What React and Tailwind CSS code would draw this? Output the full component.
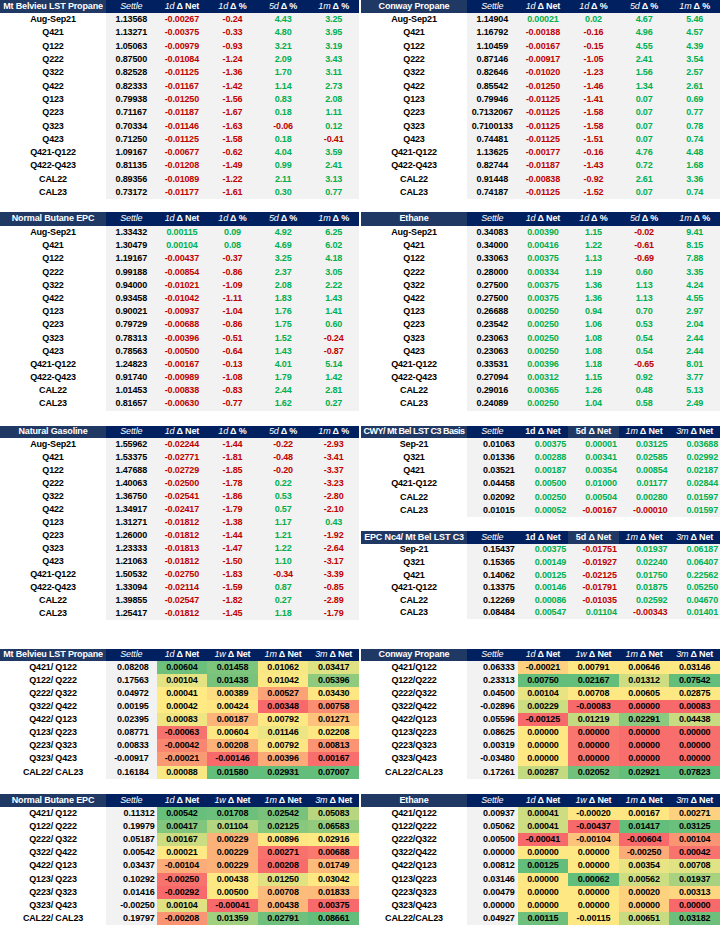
import React from 'react';

// colours taken from the sheet
const NAVY = 'bg-[#002060]';
const NAVY_LABEL = 'bg-[#203864]';

const pctHeads = [['Settle', ''], ['1d', ' Δ Net'], ['1d', ' Δ %'], ['5d', ' Δ %'], ['1m', ' Δ %']];
const basisHeads = [['Settle', ''], ['', '1d Δ Net'], ['', '5d Δ Net'], ['1m', ' Δ Net'], ['3m', ' Δ Net']];
const heatHeads = [['Settle', ''], ['1d', ' Δ Net'], ['1w', ' Δ Net'], ['1m', ' Δ Net'], ['3m', ' Δ Net']];

const mtBelvieu = [
  ['Aug-Sep21', '1.13568', '-0.00267', '-0.24', '4.43', '3.25'],
  ['Q421', '1.13271', '-0.00375', '-0.33', '4.80', '3.95'],
  ['Q122', '1.05063', '-0.00979', '-0.93', '3.21', '3.19'],
  ['Q222', '0.87500', '-0.01084', '-1.24', '2.09', '3.43'],
  ['Q322', '0.82528', '-0.01125', '-1.36', '1.70', '3.11'],
  ['Q422', '0.82333', '-0.01167', '-1.42', '1.14', '2.73'],
  ['Q123', '0.79938', '-0.01250', '-1.56', '0.83', '2.08'],
  ['Q223', '0.71167', '-0.01187', '-1.67', '0.18', '1.11'],
  ['Q323', '0.70334', '-0.01146', '-1.63', '-0.06', '0.12'],
  ['Q423', '0.71250', '-0.01125', '-1.58', '0.18', '-0.41'],
  ['Q421-Q122', '1.09167', '-0.00677', '-0.62', '4.04', '3.59'],
  ['Q422-Q423', '0.81135', '-0.01208', '-1.49', '0.99', '2.41'],
  ['CAL22', '0.89356', '-0.01089', '-1.22', '2.11', '3.13'],
  ['CAL23', '0.73172', '-0.01177', '-1.61', '0.30', '0.77'],
];

const conway = [
  ['Aug-Sep21', '1.14904', '0.00021', '0.02', '4.67', '5.46'],
  ['Q421', '1.16792', '-0.00188', '-0.16', '4.96', '4.57'],
  ['Q122', '1.10459', '-0.00167', '-0.15', '4.55', '4.39'],
  ['Q222', '0.87146', '-0.00917', '-1.05', '2.41', '3.54'],
  ['Q322', '0.82646', '-0.01020', '-1.23', '1.56', '2.57'],
  ['Q422', '0.85542', '-0.01250', '-1.46', '1.34', '2.61'],
  ['Q123', '0.79946', '-0.01125', '-1.41', '0.07', '0.69'],
  ['Q223', '0.7132067', '-0.01125', '-1.58', '0.07', '0.77'],
  ['Q323', '0.7100133', '-0.01125', '-1.58', '0.07', '0.78'],
  ['Q423', '0.74481', '-0.01125', '-1.51', '0.07', '0.74'],
  ['Q421-Q122', '1.13625', '-0.00177', '-0.16', '4.76', '4.48'],
  ['Q422-Q423', '0.82744', '-0.01187', '-1.43', '0.72', '1.68'],
  ['CAL22', '0.91448', '-0.00838', '-0.92', '2.61', '3.36'],
  ['CAL23', '0.74187', '-0.01125', '-1.52', '0.07', '0.74'],
];

const butane = [
  ['Aug-Sep21', '1.33432', '0.00115', '0.09', '4.92', '6.25'],
  ['Q421', '1.30479', '0.00104', '0.08', '4.69', '6.02'],
  ['Q122', '1.19167', '-0.00437', '-0.37', '3.25', '4.18'],
  ['Q222', '0.99188', '-0.00854', '-0.86', '2.37', '3.05'],
  ['Q322', '0.94000', '-0.01021', '-1.09', '2.08', '2.22'],
  ['Q422', '0.93458', '-0.01042', '-1.11', '1.83', '1.43'],
  ['Q123', '0.90021', '-0.00937', '-1.04', '1.76', '1.41'],
  ['Q223', '0.79729', '-0.00688', '-0.86', '1.75', '0.60'],
  ['Q323', '0.78313', '-0.00396', '-0.51', '1.52', '-0.24'],
  ['Q423', '0.78563', '-0.00500', '-0.64', '1.43', '-0.87'],
  ['Q421-Q122', '1.24823', '-0.00167', '-0.13', '4.01', '5.14'],
  ['Q422-Q423', '0.91740', '-0.00989', '-1.08', '1.79', '1.42'],
  ['CAL22', '1.01453', '-0.00838', '-0.83', '2.44', '2.81'],
  ['CAL23', '0.81657', '-0.00630', '-0.77', '1.62', '0.27'],
];

const ethane = [
  ['Aug-Sep21', '0.34083', '0.00390', '1.15', '-0.02', '9.41'],
  ['Q421', '0.34000', '0.00416', '1.22', '-0.61', '8.15'],
  ['Q122', '0.33063', '0.00375', '1.13', '-0.69', '7.88'],
  ['Q222', '0.28000', '0.00334', '1.19', '0.60', '3.35'],
  ['Q322', '0.27500', '0.00375', '1.36', '1.13', '4.24'],
  ['Q422', '0.27500', '0.00375', '1.36', '1.13', '4.55'],
  ['Q123', '0.26688', '0.00250', '0.94', '0.70', '2.97'],
  ['Q223', '0.23542', '0.00250', '1.06', '0.53', '2.04'],
  ['Q323', '0.23063', '0.00250', '1.08', '0.54', '2.44'],
  ['Q423', '0.23063', '0.00250', '1.08', '0.54', '2.44'],
  ['Q421-Q122', '0.33531', '0.00396', '1.18', '-0.65', '8.01'],
  ['Q422-Q423', '0.27094', '0.00312', '1.15', '0.92', '3.77'],
  ['CAL22', '0.29016', '0.00365', '1.26', '0.48', '5.13'],
  ['CAL23', '0.24089', '0.00250', '1.04', '0.58', '2.49'],
];

const natGas = [
  ['Aug-Sep21', '1.55962', '-0.02244', '-1.44', '-0.22', '-2.93'],
  ['Q421', '1.53375', '-0.02771', '-1.81', '-0.48', '-3.41'],
  ['Q122', '1.47688', '-0.02729', '-1.85', '-0.20', '-3.37'],
  ['Q222', '1.40063', '-0.02500', '-1.78', '0.22', '-3.23'],
  ['Q322', '1.36750', '-0.02541', '-1.86', '0.53', '-2.80'],
  ['Q422', '1.34917', '-0.02417', '-1.79', '0.57', '-2.10'],
  ['Q123', '1.31271', '-0.01812', '-1.38', '1.17', '0.43'],
  ['Q223', '1.26000', '-0.01812', '-1.44', '1.21', '-1.92'],
  ['Q323', '1.23333', '-0.01813', '-1.47', '1.22', '-2.64'],
  ['Q423', '1.21063', '-0.01812', '-1.50', '1.10', '-3.17'],
  ['Q421-Q122', '1.50532', '-0.02750', '-1.83', '-0.34', '-3.39'],
  ['Q422-Q423', '1.33094', '-0.02114', '-1.59', '0.87', '-0.85'],
  ['CAL22', '1.39855', '-0.02547', '-1.82', '0.27', '-2.89'],
  ['CAL23', '1.25417', '-0.01812', '-1.45', '1.18', '-1.79'],
];

const cwyBasis = [
  ['Sep-21', '0.01063', '0.00375', '0.00001', '0.03125', '0.03688'],
  ['Q321', '0.01336', '0.00288', '0.00341', '0.02585', '0.02992'],
  ['Q421', '0.03521', '0.00187', '0.00354', '0.00854', '0.02187'],
  ['Q421-Q122', '0.04458', '0.00500', '0.01000', '0.01177', '0.02844'],
  ['CAL22', '0.02092', '0.00250', '0.00504', '0.00280', '0.01597'],
  ['CAL23', '0.01015', '0.00052', '-0.00167', '-0.00010', '0.01597'],
];

const epcBasis = [
  ['Sep-21', '0.15437', '0.00375', '-0.01751', '0.01937', '0.06187'],
  ['Q321', '0.15365', '0.00149', '-0.01927', '0.02240', '0.06407'],
  ['Q421', '0.14062', '0.00125', '-0.02125', '0.01750', '0.22562'],
  ['Q421-Q122', '0.13375', '0.00146', '-0.01791', '0.01875', '0.05250'],
  ['CAL22', '0.12269', '0.00086', '-0.01035', '0.02592', '0.04670'],
  ['CAL23', '0.08484', '0.00547', '0.01104', '-0.00343', '0.01401'],
];

// heat map rows: label, settle, then [value, bg] pairs
const heatMtBel = [
  ['Q421/ Q122', '0.08208', ['0.00604', 'bg-[#6cc07b]'], ['0.01458', 'bg-[#7dc47d]'], ['0.01062', 'bg-[#f7e883]'], ['0.03417', 'bg-[#dfe283]']],
  ['Q122/ Q222', '0.17563', ['0.00104', 'bg-[#e4e383]'], ['0.01438', 'bg-[#78c27c]'], ['0.01042', 'bg-[#fde984]'], ['0.05396', 'bg-[#8fca7e]']],
  ['Q222/ Q322', '0.04972', ['0.00041', 'bg-[#ffea84]'], ['0.00389', 'bg-[#fedc81]'], ['0.00527', 'bg-[#fba276]'], ['0.03430', 'bg-[#fee683]']],
  ['Q322/ Q422', '0.00195', ['0.00042', 'bg-[#ffea84]'], ['0.00424', 'bg-[#fee683]'], ['0.00348', 'bg-[#f8696b]'], ['0.00758', 'bg-[#fa8d72]']],
  ['Q422/ Q123', '0.02395', ['0.00083', 'bg-[#efe683]'], ['0.00187', 'bg-[#fcb47a]'], ['0.00792', 'bg-[#fee884]'], ['0.01271', 'bg-[#fdc37d]']],
  ['Q123/ Q223', '0.08771', ['-0.00063', 'bg-[#f8726d]'], ['0.00604', 'bg-[#fee884]'], ['0.01146', 'bg-[#ebe583]'], ['0.02208', 'bg-[#fee884]']],
  ['Q223/ Q323', '0.00833', ['-0.00042', 'bg-[#f9876f]'], ['0.00208', 'bg-[#fcb179]'], ['0.00792', 'bg-[#fee583]'], ['0.00813', 'bg-[#fa9473]']],
  ['Q323/ Q423', '-0.00917', ['-0.00021', 'bg-[#fa9a74]'], ['-0.00146', 'bg-[#f8696b]'], ['0.00396', 'bg-[#fbaa78]'], ['0.00167', 'bg-[#f86e6c]']],
  ['CAL22/ CAL23', '0.16184', ['0.00088', 'bg-[#f7e883]'], ['0.01580', 'bg-[#63be7b]'], ['0.02931', 'bg-[#63be7b]'], ['0.07007', 'bg-[#63be7b]']],
];

const heatConway = [
  ['Q421/Q122', '0.06333', ['-0.00021', 'bg-[#fdd17f]'], ['0.00791', 'bg-[#fee884]'], ['0.00646', 'bg-[#fee884]'], ['0.03146', 'bg-[#fee884]']],
  ['Q122/Q222', '0.23313', ['0.00750', 'bg-[#63be7b]'], ['0.02167', 'bg-[#63be7b]'], ['0.01312', 'bg-[#cfdd82]'], ['0.07542', 'bg-[#63be7b]']],
  ['Q222/Q322', '0.04500', ['0.00104', 'bg-[#e8e483]'], ['0.00708', 'bg-[#fee884]'], ['0.00605', 'bg-[#fee884]'], ['0.02875', 'bg-[#fee884]']],
  ['Q322/Q422', '-0.02896', ['0.00229', 'bg-[#cddd82]'], ['-0.00083', 'bg-[#f8696b]'], ['0.00000', 'bg-[#f8696b]'], ['0.00083', 'bg-[#f8696b]']],
  ['Q422/Q123', '0.05596', ['-0.00125', 'bg-[#f8696b]'], ['0.01219', 'bg-[#c4da81]'], ['0.02291', 'bg-[#8ac97e]'], ['0.04438', 'bg-[#c8db81]']],
  ['Q123/Q223', '0.08625', ['0.00000', 'bg-[#fee884]'], ['0.00000', 'bg-[#f8766d]'], ['0.00000', 'bg-[#f86e6c]'], ['0.00000', 'bg-[#f86e6c]']],
  ['Q223/Q323', '0.00319', ['0.00000', 'bg-[#fee884]'], ['0.00000', 'bg-[#f8766d]'], ['0.00000', 'bg-[#f86e6c]'], ['0.00000', 'bg-[#f86e6c]']],
  ['Q323/Q423', '-0.03480', ['0.00000', 'bg-[#fee884]'], ['0.00000', 'bg-[#f8766d]'], ['0.00000', 'bg-[#f86e6c]'], ['0.00000', 'bg-[#f86e6c]']],
  ['CAL22/CAL23', '0.17261', ['0.00287', 'bg-[#c4da81]'], ['0.02052', 'bg-[#71c17c]'], ['0.02921', 'bg-[#63be7b]'], ['0.07823', 'bg-[#63be7b]']],
];

const heatButane = [
  ['Q421/ Q122', '0.11312', ['0.00542', 'bg-[#66bf7b]'], ['0.01708', 'bg-[#6cc07b]'], ['0.02542', 'bg-[#78c27c]'], ['0.05083', 'bg-[#b8d680]']],
  ['Q122/ Q222', '0.19979', ['0.00417', 'bg-[#82c67d]'], ['0.01104', 'bg-[#b4d580]'], ['0.02125', 'bg-[#88c87d]'], ['0.06583', 'bg-[#93cb7e]']],
  ['Q222/ Q322', '0.05187', ['0.00167', 'bg-[#cbdc81]'], ['0.00229', 'bg-[#fcb179]'], ['0.00896', 'bg-[#fee683]'], ['0.02916', 'bg-[#feea84]']],
  ['Q322/ Q422', '0.00542', ['0.00021', 'bg-[#ffe984]'], ['0.00229', 'bg-[#fcb179]'], ['0.00271', 'bg-[#f8716d]'], ['0.00688', 'bg-[#f9796e]']],
  ['Q422/ Q123', '0.03437', ['-0.00104', 'bg-[#fbac78]'], ['0.00229', 'bg-[#fcb179]'], ['0.00208', 'bg-[#f86b6b]'], ['0.01749', 'bg-[#fcbb7b]']],
  ['Q123/ Q223', '0.10292', ['-0.00250', 'bg-[#f8736d]'], ['0.00438', 'bg-[#fee884]'], ['0.01250', 'bg-[#e2e283]'], ['0.03042', 'bg-[#fee884]']],
  ['Q223/ Q323', '0.01416', ['-0.00292', 'bg-[#f8696b]'], ['0.00500', 'bg-[#fee884]'], ['0.00708', 'bg-[#fcbc7b]'], ['0.01833', 'bg-[#fcba7b]']],
  ['Q323/ Q423', '-0.00250', ['0.00104', 'bg-[#dfe183]'], ['-0.00041', 'bg-[#f8696b]'], ['0.00438', 'bg-[#fcb67a]'], ['0.00375', 'bg-[#f8696b]']],
  ['CAL22/ CAL23', '0.19797', ['-0.00208', 'bg-[#fa9473]'], ['0.01359', 'bg-[#9fcf7f]'], ['0.02791', 'bg-[#6fc07c]'], ['0.08661', 'bg-[#63be7b]']],
];

const heatEthane = [
  ['Q421/Q122', '0.00937', ['0.00041', 'bg-[#cfdd82]'], ['-0.00020', 'bg-[#fee683]'], ['0.00167', 'bg-[#fee683]'], ['0.00271', 'bg-[#fdd17f]']],
  ['Q122/Q222', '0.05062', ['0.00041', 'bg-[#cfdd82]'], ['-0.00437', 'bg-[#f8696b]'], ['0.01417', 'bg-[#63be7b]'], ['0.03125', 'bg-[#6bc07b]']],
  ['Q222/Q322', '0.00500', ['-0.00041', 'bg-[#f8696b]'], ['-0.00104', 'bg-[#fdc37d]'], ['-0.00604', 'bg-[#f8696b]'], ['0.00104', 'bg-[#fa9473]']],
  ['Q322/Q422', '0.00000', ['0.00000', 'bg-[#fee884]'], ['0.00000', 'bg-[#fee884]'], ['-0.00250', 'bg-[#fbaa78]'], ['0.00042', 'bg-[#f8736d]']],
  ['Q422/Q123', '0.00812', ['0.00125', 'bg-[#63be7b]'], ['0.00000', 'bg-[#fee884]'], ['0.00354', 'bg-[#e8e483]'], ['0.00708', 'bg-[#e1e283]']],
  ['Q123/Q223', '0.03146', ['0.00000', 'bg-[#fee884]'], ['0.00062', 'bg-[#63be7b]'], ['0.00562', 'bg-[#cddd82]'], ['0.01937', 'bg-[#a8d27f]']],
  ['Q223/Q323', '0.00479', ['0.00000', 'bg-[#fee884]'], ['0.00000', 'bg-[#fee884]'], ['0.00020', 'bg-[#fdd27f]'], ['0.00313', 'bg-[#fed680]']],
  ['Q323/Q423', '0.00000', ['0.00000', 'bg-[#fee884]'], ['0.00000', 'bg-[#fee884]'], ['0.00000', 'bg-[#fdd07f]'], ['0.00000', 'bg-[#f8696b]']],
  ['CAL22/CAL23', '0.04927', ['0.00115', 'bg-[#6fc07c]'], ['-0.00115', 'bg-[#fee884]'], ['0.00651', 'bg-[#c9db81]'], ['0.03182', 'bg-[#6ebf7c]']],
];

const tone = (v) => (v.startsWith('-') ? 'text-[#c00000]' : 'text-[#00b050]');

const GRID = 'grid grid-cols-[106px_repeat(5,1fr)]';

const HeaderRow = ({ title, heads, height, altBg = {}, titleClass = '' }) => (
  <div className={`${GRID} ${height} text-white`}>
    <div className={`${NAVY_LABEL} ${titleClass} flex items-center justify-center whitespace-nowrap overflow-hidden`}>{title}</div>
    {heads.map(([it, rest], i) => (
      <div key={i} className={`${altBg[i] || NAVY} flex items-center justify-center whitespace-pre`}>
        {it && <span className="italic font-normal">{it}</span>}
        {rest && <span>{rest}</span>}
      </div>
    ))}
  </div>
);

const ChangeTable = ({ title, rows, hdr, row }) => (
  <div>
    <HeaderRow title={title} heads={pctHeads} height={hdr} />
    {rows.map(([label, settle, ...vals]) => (
      <div key={label} className={`${GRID} ${row}`}>
        <div className="bg-white flex items-center justify-center">{label}</div>
        <div className="bg-[#f2f2f2] flex items-center justify-center text-black">{settle}</div>
        {vals.map((v, i) => (
          <div key={i} className={`bg-[#f2f2f2] flex items-center justify-center ${tone(v)}`}>{v}</div>
        ))}
      </div>
    ))}
  </div>
);

const BasisTable = ({ title, rows, hdr, row, titleClass }) => (
  <div>
    <HeaderRow title={title} heads={basisHeads} height={hdr} altBg={{ 2: 'bg-[#1f3864]' }} titleClass={titleClass} />
    {rows.map(([label, settle, ...vals]) => (
      <div key={label} className={`${GRID} ${row}`}>
        <div className="bg-white flex items-center justify-center">{label}</div>
        <div className="bg-[#f2f2f2] flex items-center justify-end pr-[3px] text-black">{settle}</div>
        {vals.map((v, i) => (
          <div key={i} className={`bg-[#f2f2f2] flex items-center justify-end pr-[2px] ${tone(v)}`}>{v}</div>
        ))}
      </div>
    ))}
  </div>
);

const HeatTable = ({ title, rows, hdr, row, settlePad = 'pr-[4px]' }) => (
  <div>
    <HeaderRow title={title} heads={heatHeads} height={hdr} />
    {rows.map(([label, settle, ...cells]) => (
      <div key={label} className={`${GRID} ${row}`}>
        <div className="bg-white flex items-center justify-center whitespace-pre">{label}</div>
        <div className={`bg-[#f2f2f2] flex items-center justify-end ${settlePad}`}>{settle}</div>
        {cells.map(([v, bg], i) => (
          <div key={i} className={`${bg} flex items-center justify-center`}>{v}</div>
        ))}
      </div>
    ))}
  </div>
);

export default function App() {
  return (
    <div className="w-[720px] h-[928px] bg-white overflow-hidden font-['Liberation_Sans',Arial,sans-serif] text-[9px] font-bold text-black leading-none tracking-[-0.15px]">
      <div className="grid grid-cols-[359px_359px] gap-x-[2px]">
        <ChangeTable title="Mt Belvieu LST Propane" rows={mtBelvieu} hdr="h-[13px]" row="h-[13.3px]" />
        <ChangeTable title="Conway Propane" rows={conway} hdr="h-[13px]" row="h-[13.3px]" />
      </div>

      <div className="grid grid-cols-[359px_359px] gap-x-[2px] mt-[12.8px]">
        <ChangeTable title="Normal Butane EPC" rows={butane} hdr="h-[14px]" row="h-[13.2px]" />
        <ChangeTable title="Ethane" rows={ethane} hdr="h-[14px]" row="h-[13.2px]" />
      </div>

      <div className="grid grid-cols-[359px_359px] gap-x-[2px] mt-[15.2px]">
        <ChangeTable title="Natural Gasoline" rows={natGas} hdr="h-[12px]" row="h-[13px]" />
        <div className="flex flex-col">
          <BasisTable title="CWY/ Mt Bel LST C3 Basis" rows={cwyBasis} hdr="h-[12px]" row="h-[13.2px]" titleClass="tracking-[-0.5px]" />
          <div className="mt-[13.8px]">
            <BasisTable title="EPC Nc4/ Mt Bel LST C3" rows={epcBasis} hdr="h-[13px]" row="h-[12.6px]" />
          </div>
        </div>
      </div>

      <div className="grid grid-cols-[359px_359px] gap-x-[2px] mt-[29px]">
        <HeatTable title="Mt Belvieu LST Propane" rows={heatMtBel} hdr="h-[12px]" row="h-[13.1px]" settlePad="pr-[8px]" />
        <HeatTable title="Conway Propane" rows={heatConway} hdr="h-[12px]" row="h-[13.1px]" settlePad="pr-[3px]" />
      </div>

      <div className="grid grid-cols-[359px_359px] gap-x-[2px] mt-[15px]">
        <HeatTable title="Normal Butane EPC" rows={heatButane} hdr="h-[13px]" row="h-[13.2px]" settlePad="pr-[2px]" />
        <HeatTable title="Ethane" rows={heatEthane} hdr="h-[13px]" row="h-[13.2px]" settlePad="pr-[3px]" />
      </div>
    </div>
  );
}
